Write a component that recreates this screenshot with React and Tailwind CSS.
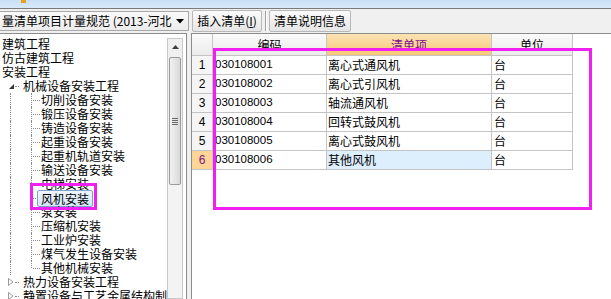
import React from "react";

const CJK = { fontFamily: '"Noto Sans CJK SC", "Liberation Sans", sans-serif' };

const tree = [
  { t: "建筑工程", lv: 0 },
  { t: "仿古建筑工程", lv: 0 },
  { t: "安装工程", lv: 0 },
  { t: "机械设备安装工程", lv: 1, exp: "open" },
  { t: "切削设备安装", lv: 2 },
  { t: "锻压设备安装", lv: 2 },
  { t: "铸造设备安装", lv: 2 },
  { t: "起重设备安装", lv: 2 },
  { t: "起重机轨道安装", lv: 2 },
  { t: "输送设备安装", lv: 2 },
  { t: "电梯安装", lv: 2 },
  { t: "风机安装", lv: 2, sel: true },
  { t: "泵安装", lv: 2 },
  { t: "压缩机安装", lv: 2 },
  { t: "工业炉安装", lv: 2 },
  { t: "煤气发生设备安装", lv: 2 },
  { t: "其他机械安装", lv: 2, last: true },
  { t: "热力设备安装工程", lv: 1, exp: "closed" },
  { t: "静置设备与工艺金属结构制作安装工程", lv: 1, exp: "closed" },
];

const rows = [
  ["030108001", "离心式通风机", "台"],
  ["030108002", "离心式引风机", "台"],
  ["030108003", "轴流通风机", "台"],
  ["030108004", "回转式鼓风机", "台"],
  ["030108005", "离心式鼓风机", "台"],
  ["030108006", "其他风机", "台"],
];

const dotV = "w-0 border-l border-dotted border-[#8a8a8a]";
const dotH = "h-0 border-t border-dotted border-[#8a8a8a]";

function TreeRow({ r }) {
  if (r.lv === 0) {
    return (
      <div className="h-[14px] flex items-center pl-[2px] whitespace-nowrap">
        <span className="leading-[14px]">{r.t}</span>
      </div>
    );
  }
  if (r.lv === 1) {
    return (
      <div className="h-[14px] flex items-stretch whitespace-nowrap">
        <div className="w-[22px] shrink-0 flex items-stretch">
          <div className="w-[7px] shrink-0" />
          <div className="w-[8px] shrink-0 flex items-center justify-center">
            {r.exp === "open" ? (
              <svg width="7" height="7" viewBox="0 0 7 7">
                <path d="M6 1 L6 6 L1 6 Z" fill="#333" />
              </svg>
            ) : (
              <svg width="6" height="8" viewBox="0 0 6 8">
                <path d="M0.5 0.5 L5 4 L0.5 7.5 Z" fill="none" stroke="#9a9a9a" />
              </svg>
            )}
          </div>
          <div className="w-[5px] shrink-0 flex items-center">
            <div className={dotH + " w-[4px]"} />
          </div>
        </div>
        <span className="leading-[14px] pl-[1px]">{r.t}</span>
      </div>
    );
  }
  return (
    <div className="h-[14px] flex items-stretch whitespace-nowrap">
      <div className="w-[10px] shrink-0" />
      <div className={dotV + " h-full shrink-0"} />
      <div className="w-[20px] shrink-0" />
      <div className="w-[9px] shrink-0 flex items-start">
        <div className={dotV + " shrink-0 " + (r.last ? "h-[7px]" : "h-full")} />
        <div className={dotH + " w-[7px] mt-[7px] ml-[1px]"} />
      </div>
      {r.sel ? (
        <span className="leading-[14px] h-[17px] -my-[1px] ml-[-3px] px-[3px] border border-[#7da2ce] rounded-[2px] bg-gradient-to-b from-[#eef5fd] to-[#d6e6f8] flex items-center">
          {r.t}
        </span>
      ) : (
        <span className="leading-[14px] ml-[1px]">{r.t}</span>
      )}
    </div>
  );
}

export default function App() {
  return (
    <div
      className="w-[611px] h-[299px] overflow-hidden bg-[#f0f0f0] text-[12px] text-black relative"
      style={CJK}
    >
      {/* top band */}
      <div className="h-[8px] bg-gradient-to-b from-[#c9def5] to-[#d9e9fb] relative">
        <div className="absolute left-[21px] top-0 w-[5px] h-[3px] bg-[#e8a020]" />
      </div>
      <div className="h-[1px] bg-[#7a7a7a]" />

      {/* toolbar */}
      <div className="h-[24px] flex items-start">
        <div className="mt-[2px] w-[189px] h-[20px] border-y border-r border-[#a8a8a8] bg-gradient-to-b from-[#fafafa] to-[#ececec] flex items-center justify-between pr-[4px] whitespace-nowrap overflow-hidden">
          <span className="pl-[2px] leading-[14px]">量清单项目计量规范 (2013-河北</span>
          <svg width="8" height="5" viewBox="0 0 8 5" className="shrink-0 ml-[2px]">
            <path d="M0 0 L8 0 L4 4.5 Z" fill="#000" />
          </svg>
        </div>
        <div className="mt-[1px] ml-[3px] h-[22px] w-[70px] border border-[#b8b8b8] rounded-[2px] bg-gradient-to-b from-[#fbfbfb] to-[#e6e6e6] flex items-center justify-center whitespace-nowrap">
          <span>插入清单(<span className="underline">I</span>)</span>
        </div>
        <div className="mt-[2px] ml-[3px] w-[2px] h-[20px] border-l border-[#a0a0a0] border-r-white border-r" />
        <div className="mt-[1px] ml-[2px] h-[22px] w-[82px] border border-[#b8b8b8] rounded-[2px] bg-gradient-to-b from-[#fbfbfb] to-[#e6e6e6] flex items-center justify-center whitespace-nowrap">
          清单说明信息
        </div>
      </div>

      {/* main */}
      <div className="flex h-[266px]">
        {/* left panel */}
        <div className="w-[187px] shrink-0 bg-white border-t border-r border-[#8c8c8c] flex">
          <div className="flex-1 overflow-hidden pt-[3px]">
            {tree.map((r, i) => (
              <TreeRow key={i} r={r} />
            ))}
          </div>
          {/* scrollbar */}
          <div className="w-[16px] shrink-0 mt-[4px] mr-[3px] border border-[#c8c8c8] bg-[#f0f0f0] flex flex-col">
            <div className="h-[16px] flex items-center justify-center">
              <svg width="7" height="4" viewBox="0 0 7 4">
                <path d="M0 4 L7 4 L3.5 0 Z" fill="#404040" />
              </svg>
            </div>
            <div className="mt-[2px] mx-[1px] h-[128px] border border-[#9a9a9a] rounded-[2px] bg-gradient-to-r from-[#f2f2f2] to-[#d9d9d9] flex flex-col items-center justify-center gap-[1px]">
              <div className="w-[6px] h-[1px] bg-[#6a6a6a]" />
              <div className="w-[6px] h-[1px] bg-[#6a6a6a]" />
              <div className="w-[6px] h-[1px] bg-[#6a6a6a]" />
              <div className="w-[6px] h-[1px] bg-[#6a6a6a]" />
            </div>
            <div className="flex-1 bg-[#f3f3f3]" />
          </div>
        </div>

        <div className="w-[4px] shrink-0" />

        {/* right panel */}
        <div className="flex-1 bg-white border-l border-t border-[#8c8c8c]" style={{ fontFamily: '"Liberation Sans", "Noto Sans CJK SC", sans-serif' }}>
          {/* header */}
          <div className="flex h-[22px]">
            <div className="w-[21px] h-full border-r border-b border-[#c4c4c4] bg-gradient-to-b from-[#fafafa] to-[#ececec]" />
            <div className="w-[114px] h-full border-r border-b border-[#c4c4c4] bg-gradient-to-b from-[#fafafa] to-[#ececec] flex items-center justify-center" style={CJK}>
              编码
            </div>
            <div className="w-[165px] h-full border-r border-b border-[#c4c4c4] bg-gradient-to-b from-[#fbe3b4] to-[#f6c875] flex items-center justify-center text-[#80108a]" style={CJK}>
              清单项
            </div>
            <div className="w-[81px] h-full border-r border-b border-[#c4c4c4] bg-gradient-to-b from-[#fafafa] to-[#ececec] flex items-center justify-center" style={CJK}>
              单位
            </div>
          </div>
          {rows.map((r, i) => {
            const active = i === 5;
            return (
              <div key={i} className="flex h-[19px]">
                <div
                  className={
                    "w-[21px] h-full border-r border-b border-[#c4c4c4] flex items-center justify-center text-[12px] " +
                    (active ? "bg-[#fdd596] text-[#7a137e]" : "bg-[#f5f5f5]")
                  }
                >
                  {i + 1}
                </div>
                <div className="w-[114px] h-full border-r border-b border-[#c4c4c4] flex items-center pl-[2px] text-[11.5px]">
                  {r[0]}
                </div>
                <div
                  className={
                    "w-[165px] h-full border-r border-b border-[#c4c4c4] flex items-center pl-[1px] " +
                    (active ? "bg-[#ddeefd]" : "")
                  }
                  style={CJK}
                >
                  {r[1]}
                </div>
                <div className="w-[81px] h-full border-r border-b border-[#c4c4c4] flex items-center pl-[2px]" style={CJK}>
                  {r[2]}
                </div>
              </div>
            );
          })}
        </div>
      </div>

      {/* annotation rectangles */}
      <div className="absolute left-[213px] top-[48px] w-[379px] h-[162px] border-[3px] border-[#f020f0] pointer-events-none" />
      <div className="absolute left-[30px] top-[183px] w-[67px] h-[27px] border-[3px] border-[#f020f0] pointer-events-none" />
    </div>
  );
}
